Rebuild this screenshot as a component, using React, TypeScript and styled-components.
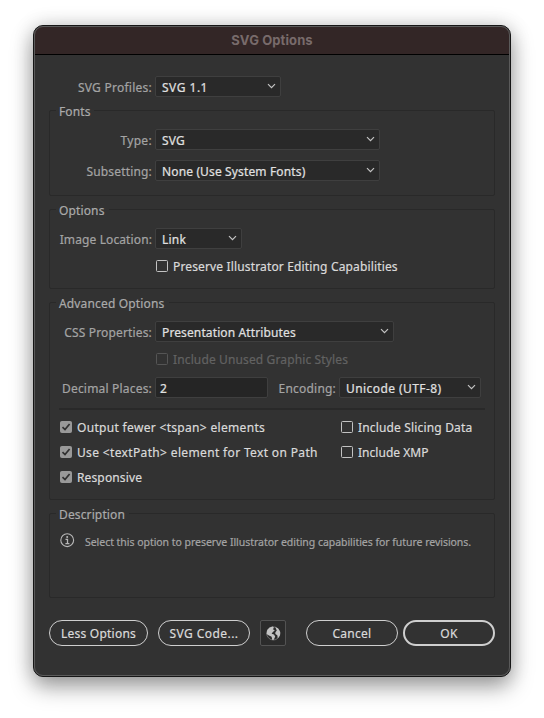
import React from 'react';
import styled, { createGlobalStyle } from 'styled-components';

const GlobalStyle = createGlobalStyle`
  * { box-sizing: border-box; }
  body { margin: 0; background: #fff; overflow: hidden; }
`;

const Desktop = styled.main`
  width: 544px;
  height: 718px;
  padding: 25px 33px;
  font: 12px/16px "Noto Sans", "Open Sans", sans-serif;
  color: #dedede;
`;

const Dialog = styled.section`
  position: relative;
  display: flex;
  flex-direction: column;
  width: 478px;
  height: 652px;
  border: 1px solid #161616;
  border-radius: 10px;
  background: #323232;
  box-shadow: 0 10px 22px rgba(0, 0, 0, 0.36), 0 0 20px rgba(0, 0, 0, 0.16);

  &::after {
    content: '';
    position: absolute;
    inset: 0;
    border: 1px solid #5b5b5b;
    border-radius: 9px;
    pointer-events: none;
  }
`;

const TitleBar = styled.header`
  display: flex;
  align-items: center;
  justify-content: center;
  height: 29px;
  border-bottom: 1px solid #000;
  border-radius: 9px 9px 0 0;
  background: #332626;
  color: #786b6b;
  font: bold 13px/16px Inter, sans-serif;
  letter-spacing: 0.1px;
`;

const Body = styled.div`
  display: flex;
  flex-direction: column;
  padding: 21px 15px 0;
`;

const Text = styled.span<{ $track?: number }>`
  white-space: nowrap;
  letter-spacing: ${(p) => p.$track ?? 0.15}px;
  -webkit-text-stroke: 0.2px currentColor;
`;

const Group = styled.fieldset<{ $height: number }>`
  position: relative;
  display: flex;
  flex-direction: column;
  min-width: 0;
  height: ${(p) => p.$height}px;
  margin: 13px 0 0;
  padding: 18px 0 0;
  border: 1px solid #292929;
  border-radius: 2px;
`;

const GroupTitle = styled.div`
  position: absolute;
  top: -7px;
  left: 6px;
  padding: 0 4px 0 3px;
  background: #323232;
  color: #aaa;
`;

const FieldRow = styled.div<{ $gap?: number }>`
  display: flex;
  align-items: center;
  height: 21px;
  margin-top: ${(p) => p.$gap ?? 0}px;
`;

const Label = styled.label<{ $width: number }>`
  display: flex;
  justify-content: flex-end;
  width: ${(p) => p.$width}px;
  margin-right: 3px;
  padding-top: 3px;
  color: #a4a4a4;
`;

const SelectBox = styled.div<{ $width: number }>`
  display: flex;
  align-items: center;
  justify-content: space-between;
  width: ${(p) => p.$width}px;
  height: 21px;
  padding: 2px 4px 0 6px;
  border: 1px solid #3f3f3f;
  border-radius: 2px;
  background: #292929;
  color: #e0e0e0;
`;

const NumberBox = styled(SelectBox)`
  padding-left: 4px;
  background: #252525;
`;

const Chevron = styled.svg`
  width: 9px;
  height: 6px;
  margin-top: -3px;
`;

const CheckRow = styled.label<{ $dim?: boolean }>`
  display: flex;
  align-items: center;
  gap: 5px;
  height: 12px;
  color: ${(p) => (p.$dim ? '#626262' : '#dadada')};

  ${Text} { padding-top: 2px; }
`;

const Indented = styled.div<{ $gap: number }>`
  margin: ${(p) => p.$gap}px 0 0 106px;
`;

const Mark = styled.span<{ $on?: boolean; $dim?: boolean }>`
  display: grid;
  place-items: center;
  width: 12px;
  height: 12px;
  border: 1px solid ${(p) => (p.$on ? '#999' : p.$dim ? '#555' : '#c2c2c2')};
  border-radius: 1.5px;
  background: ${(p) => (p.$on ? '#999' : 'transparent')};
`;

const Divider = styled.hr`
  width: 426px;
  height: 2px;
  margin: 10px 0 0 9px;
  border: 0;
  background: #292929;
`;

const CheckGrid = styled.div`
  display: grid;
  grid-template-columns: 281px auto;
  row-gap: 13px;
  padding: 11px 0 0 10px;
`;

const Hint = styled.div`
  display: flex;
  align-items: flex-start;
  gap: 10px;
  margin: 1px 0 0 10px;
  color: #a4a4a4;
  font-size: 10.5px;

  ${Text} { padding-top: 1px; }
`;

const Actions = styled.footer`
  display: flex;
  align-items: center;
  margin-top: 22px;
`;

const Button = styled.button<{ $width: number; $left?: number; $primary?: boolean }>`
  width: ${(p) => p.$width}px;
  height: 26px;
  margin: 0 0 0 ${(p) => p.$left ?? 0}px;
  padding: 1px 0 0;
  border: ${(p) => (p.$primary ? 2 : 1)}px solid #cfcfcf;
  border-radius: 13px;
  background: transparent;
  color: #dadada;
  font: inherit;
`;

const IconButton = styled.button`
  display: grid;
  place-items: center;
  width: 26px;
  height: 26px;
  margin: 0 0 0 10px;
  padding: 0;
  border: 1px solid #535353;
  border-radius: 2px;
  background: #2b2b2b;
`;

function Select({ width, value, track }: { width: number; value: string; track?: number }) {
  return (
    <SelectBox $width={width}>
      <Text $track={track}>{value}</Text>
      <Chevron viewBox="0 0 9 6" fill="none" stroke="#c4c4c4" strokeWidth="1.2">
        <path d="M1 1.2 4.5 4.7 8 1.2" />
      </Chevron>
    </SelectBox>
  );
}

function Check({ text, on, dim, track }: { text: string; on?: boolean; dim?: boolean; track?: number }) {
  return (
    <CheckRow $dim={dim}>
      <Mark $on={on} $dim={dim}>
        {on && (
          <svg width="10" height="10" viewBox="0 0 10 10" fill="none" stroke="#303030" strokeWidth="1.7">
            <path d="M1.5 5.2 4 7.6 8.6 2" />
          </svg>
        )}
      </Mark>
      <Text $track={track}>{text}</Text>
    </CheckRow>
  );
}

export default function App() {
  return (
    <Desktop>
      <GlobalStyle />
      <Dialog>
        <TitleBar>SVG Options</TitleBar>
        <Body>
          <FieldRow>
            <Label $width={103}><Text $track={0.25}>SVG Profiles:</Text></Label>
            <Select width={126} value="SVG 1.1" track={0.5} />
          </FieldRow>
          <Group $height={86}>
            <GroupTitle><Text $track={0.1}>Fonts</Text></GroupTitle>
            <FieldRow>
              <Label $width={102}><Text $track={0.32}>Type:</Text></Label>
              <Select width={225} value="SVG" track={0.2} />
            </FieldRow>
            <FieldRow $gap={10}>
              <Label $width={102}><Text $track={0.17}>Subsetting:</Text></Label>
              <Select width={225} value="None (Use System Fonts)" track={0.14} />
            </FieldRow>
          </Group>
          <Group $height={80}>
            <GroupTitle><Text $track={0.13}>Options</Text></GroupTitle>
            <FieldRow>
              <Label $width={102}><Text $track={0.11}>Image Location:</Text></Label>
              <Select width={87} value="Link" track={0.2} />
            </FieldRow>
            <Indented $gap={11}>
              <Check text="Preserve Illustrator Editing Capabilities" track={0.15} />
            </Indented>
          </Group>
          <Group $height={198}>
            <GroupTitle><Text $track={0.16}>Advanced Options</Text></GroupTitle>
            <FieldRow>
              <Label $width={102}><Text $track={0.15}>CSS Properties:</Text></Label>
              <Select width={239} value="Presentation Attributes" track={0.12} />
            </FieldRow>
            <Indented $gap={11}>
              <Check text="Include Unused Graphic Styles" track={0.13} dim />
            </Indented>
            <FieldRow $gap={12}>
              <Label $width={102}><Text $track={0.19}>Decimal Places:</Text></Label>
              <NumberBox $width={113}><Text>2</Text></NumberBox>
              <Label $width={68}><Text $track={0.2}>Encoding:</Text></Label>
              <Select width={142} value="Unicode (UTF-8)" track={0.42} />
            </FieldRow>
            <Divider />
            <CheckGrid>
              <Check text="Output fewer <tspan> elements" track={0.32} on />
              <Check text="Include Slicing Data" track={0.16} />
              <Check text="Use <textPath> element for Text on Path" track={0.35} on />
              <Check text="Include XMP" track={0.03} />
              <Check text="Responsive" track={0.13} on />
            </CheckGrid>
          </Group>
          <Group $height={85}>
            <GroupTitle><Text $track={0.13}>Description</Text></GroupTitle>
            <Hint>
              <svg width="15" height="15" viewBox="0 0 15 15" fill="none" stroke="#b8b8b8">
                <circle cx="7.2" cy="7.2" r="6.4" strokeWidth="1.1" />
                <path d="M5.5 6.4h2v4.1M5.4 10.6h4" strokeWidth="1.3" />
                <circle cx="7.2" cy="3.9" r="1" fill="#b8b8b8" stroke="none" />
              </svg>
              <Text $track={-0.04}>Select this option to preserve Illustrator editing capabilities for future revisions.</Text>
            </Hint>
          </Group>
          <Actions>
            <Button $width={99}><Text $track={0.23}>Less Options</Text></Button>
            <Button $width={92} $left={10}><Text $track={0.44}>SVG Code...</Text></Button>
            <IconButton aria-label="Preview in browser">
              <svg width="15" height="15" viewBox="0 0 15 15" fill="#c3c3c3">
                <circle cx="7.3" cy="7.4" r="6.6" fill="none" stroke="#858585" strokeWidth="0.7" />
                <path d="M1.2 4 3.6 1.5 6.8.6 8 1.8 6.8 3.2 8.8 4.2 6.7 6.2 5.6 7.7 8 8.6 9.2 10.4 7.8 13.8 6.3 14 5.6 10.8 3 9.4.6 8z" />
                <path d="M9.2.9 12.2 2.5 14.2 6 14 9.2 11.8 12.4 11.3 9.2 9.3 8.1 9.4 6.2 10.8 4.6z" />
              </svg>
            </IconButton>
            <Button $width={92} $left={20}><Text $track={0.27}>Cancel</Text></Button>
            <Button $width={92} $left={5} $primary><Text $track={0.4}>OK</Text></Button>
          </Actions>
        </Body>
      </Dialog>
    </Desktop>
  );
}
